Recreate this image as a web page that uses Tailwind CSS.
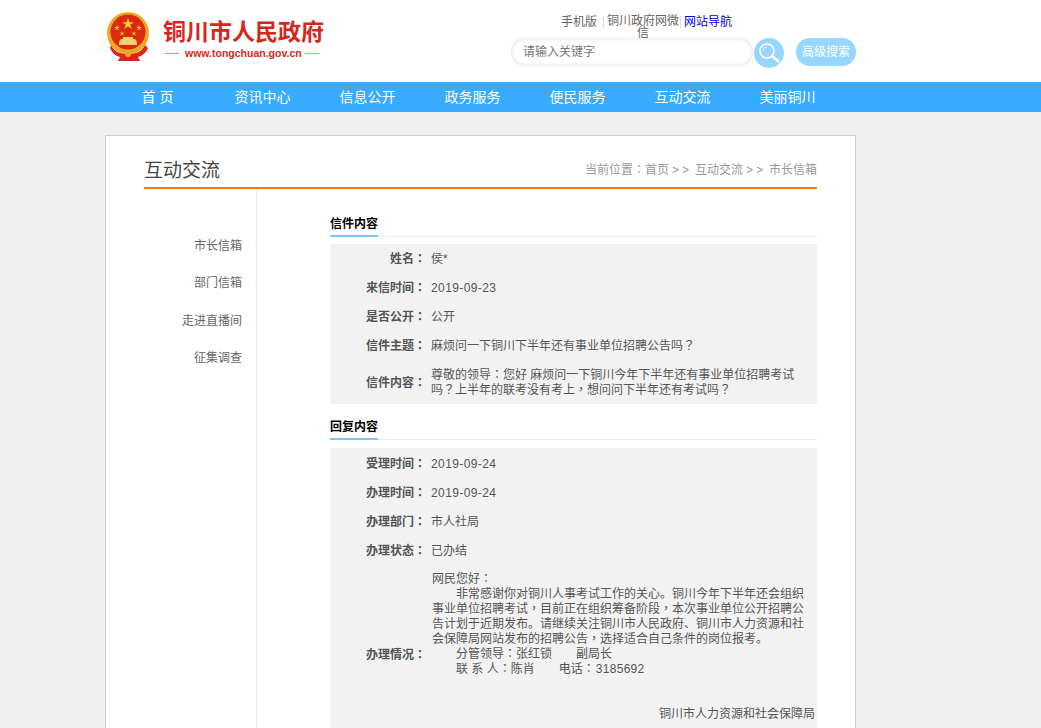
<!DOCTYPE html>
<html>
<head>
<meta charset="utf-8">
<title>铜川市人民政府</title>
<script src="https://cdn.jsdelivr.net/npm/@tailwindcss/browser@4"></script>
</head>
<body class="bg-[#f0f0f0] h-screen overflow-hidden font-['Liberation_Sans','Noto_Sans_CJK_SC',sans-serif] text-[12px] leading-[15px] text-[#555]">
<header class="bg-white h-[82px]">
  <div class="w-[750px] ml-[105px] h-full flex justify-between">
    <div class="flex items-start">
      <svg class="w-[44px] h-[50px] mt-[11px] ml-[1px]" viewBox="0 0 44 50">
        <circle cx="22" cy="22" r="21" fill="#eda91f"/>
        <circle cx="22" cy="21" r="17.500" fill="#dc2a12"/>
        <path d="M22 7l1.4 4.2h4.4l-3.6 2.6 1.4 4.2-3.6-2.6-3.6 2.6 1.4-4.2-3.6-2.6h4.4z" fill="#f8d020"/>
        <path d="M11 14l.7 2h2l-1.6 1.2.6 2-1.7-1.2-1.7 1.2.6-2L8.300 16h2zM33 14l.7 2h2l-1.600 1.200.6 2-1.700-1.200-1.700 1.200.6-2L30.300 16h2zM16 20l.6 1.700h1.800l-1.400 1 .5 1.700-1.500-1-1.500 1 .5-1.700-1.400-1h1.800zM28 20l.6 1.700h1.800l-1.400 1 .5 1.700-1.500-1-1.500 1 .5-1.700-1.400-1h1.800z" fill="#f8d020"/>
        <path d="M13 31h18v3H13zM15 28h14l2 3H13zM17 26h10v2H17z" fill="#f6cf6a"/>
        <path d="M5 34c3 7 10 9 17 9s14-2 17-9l3 3c-2 5-6 8-10 9l2 4H12l2-4c-4-1-8-4-10-9z" fill="#d8281a"/>
        <path d="M5 32c4 7 11 9 17 9s13-2 17-9" fill="none" stroke="#eda91f" stroke-width="3"/>
        <circle cx="22" cy="43" r="3" fill="#eda91f"/>
      </svg>
      <div class="ml-[13px] w-[170px]">
        <div class="mt-[16px] text-[23px] leading-[32px] font-bold text-[#d5281c] whitespace-nowrap">铜川市人民政府</div>
        <div class="-mt-[2px] flex items-center text-[#d5281c] whitespace-nowrap">
          <span class="w-[14px] h-px bg-[#e88a80] ml-[2px]"></span>
          <span class="ml-[6px] mr-[4px] text-[10.5px] leading-[14px] font-bold">www.tongchuan.gov.cn</span>
          <span class="w-[14px] h-px bg-[#e88a80] -ml-[1px]"></span>
        </div>
      </div>
    </div>
    <div class="relative w-[343px] mr-[1px]">
      <div class="flex absolute left-[50px] top-[14px] w-[180px] text-[#666]">
        <a class="w-[36px] text-center whitespace-nowrap mt-[1px]">手机版</a>
        <span class="w-[1px] h-[12px] bg-[#ddd] ml-[6px] mt-[2px]"></span>
        <a class="w-[74px] text-center mt-[1px] ml-[2px] leading-[12px]">铜川政府网微信</a>
        <span class="w-[1px] h-[12px] bg-[#ddd] mt-[2px]"></span>
        <a class="ml-[3px] mt-[1px] text-[#0000ee] whitespace-nowrap">网站导航</a>
      </div>
      <div class="absolute left-0 top-[38px] w-[242px] h-[28px] rounded-full bg-white shadow-[inset_0_0_5px_rgba(0,0,0,0.14),0_0_2px_rgba(0,0,0,0.06)] px-[12px] leading-[28px] text-[#777]">请输入关键字</div>
      <div class="absolute left-[243px] top-[38px] w-[30px] h-[30px] rounded-full bg-[#97d6ff] flex items-center justify-center">
        <svg class="w-[24px] h-[24px]" viewBox="0 0 24 24" fill="none" stroke="#fff">
          <circle cx="10" cy="10" r="7" stroke-width="1.500"/>
          <path d="M15.500 15.500l6 5" stroke-width="2.500" stroke-linecap="round"/>
          <path d="M6 10a4 4 0 0 1 4-4" stroke-width="1" opacity=".7"/>
        </svg>
      </div>
      <div class="absolute left-[285px] top-[38px] w-[60px] h-[28px] rounded-full bg-[#97d6ff] text-white text-center leading-[28px]">高级搜索</div>
    </div>
  </div>
</header>
<nav class="h-[30px] bg-[#38abff]">
  <ul class="flex ml-[105px] text-white text-[14px] leading-[31px]">
    <li class="w-[105px] text-center">首 页</li>
    <li class="w-[105px] text-center">资讯中心</li>
    <li class="w-[105px] text-center">信息公开</li>
    <li class="w-[105px] text-center">政务服务</li>
    <li class="w-[105px] text-center">便民服务</li>
    <li class="w-[105px] text-center">互动交流</li>
    <li class="w-[105px] text-center">美丽铜川</li>
  </ul>
</nav>
<main class="mt-[23px] ml-[105px] w-[751px] bg-white border border-[#cccccc] px-[38px] pb-[40px]">
  <div class="flex justify-between items-end h-[53px] border-b-2 border-[#ff7d00] pb-[2px]">
    <h1 class="text-[19px] leading-[28px] text-[#444]">互动交流</h1>
    <p class="text-[#999] mb-[7px]">当前位置<span class="leading-none font-['Noto_Sans_CJK_TC']">：</span>首页<span class="inline-block w-[26px] text-center tracking-[3px]">&gt;&gt;</span>互动交流<span class="inline-block w-[26px] text-center tracking-[3px]">&gt;&gt;</span>市长信箱</p>
  </div>
  <div class="flex">
    <aside class="w-[113px] shrink-0 border-r border-[#f3ece6] pr-[14px] pt-[50px] text-right">
      <ul class="flex flex-col gap-[22.400px] text-[#666]">
        <li>市长信箱</li>
        <li>部门信箱</li>
        <li>走进直播间</li>
        <li>征集调查</li>
      </ul>
    </aside>
    <section class="ml-[73px] w-[487px] pt-[27px]">
      <div class="border-b border-[#e9e9e9] h-[21px]">
        <h2 class="inline-block h-[21px] border-b-2 border-[#7cc5fb] font-bold text-black leading-[16px]">信件内容</h2>
      </div>
      <dl class="mt-[7px] bg-[#f2f2f2]">
        <div class="flex items-center h-[29px] pt-[2px]"><dt class="w-[96px] mr-[5px] shrink-0 text-right font-bold">姓名<span class="leading-none font-['Noto_Sans_CJK_TC']">：</span></dt><dd>侯*</dd></div>
        <div class="flex items-center h-[29px] pt-[2px]"><dt class="w-[96px] mr-[5px] shrink-0 text-right font-bold">来信时间<span class="leading-none font-['Noto_Sans_CJK_TC']">：</span></dt><dd class="tracking-[0.4px]">2019-09-23</dd></div>
        <div class="flex items-center h-[29px] pt-[2px]"><dt class="w-[96px] mr-[5px] shrink-0 text-right font-bold">是否公开<span class="leading-none font-['Noto_Sans_CJK_TC']">：</span></dt><dd>公开</dd></div>
        <div class="flex items-center h-[29px] pt-[2px]"><dt class="w-[96px] mr-[5px] shrink-0 text-right font-bold">信件主题<span class="leading-none font-['Noto_Sans_CJK_TC']">：</span></dt><dd>麻烦问一下铜川下半年还有事业单位招聘公告吗<span class="leading-none font-['Noto_Sans_CJK_TC']">？</span></dd></div>
        <div class="flex items-center h-[44px] pt-[2px]"><dt class="w-[96px] mr-[5px] shrink-0 text-right font-bold">信件内容<span class="leading-none font-['Noto_Sans_CJK_TC']">：</span></dt><dd class="w-[370px]">尊敬的领导<span class="leading-none font-['Noto_Sans_CJK_TC']">：</span>您好 麻烦问一下铜川今年下半年还有事业单位招聘考试吗<span class="leading-none font-['Noto_Sans_CJK_TC']">？</span>上半年的联考没有考上<span class="leading-none font-['Noto_Sans_CJK_TC']">，</span>想问问下半年还有考试吗<span class="leading-none font-['Noto_Sans_CJK_TC']">？</span></dd></div>
      </dl>
      <div class="mt-[15px] border-b border-[#e9e9e9] h-[21px]">
        <h2 class="inline-block h-[21px] border-b-2 border-[#7cc5fb] font-bold text-black leading-[16px]">回复内容</h2>
      </div>
      <dl class="mt-[8px] bg-[#f2f2f2]">
        <div class="flex items-center h-[29px] pt-[4px]"><dt class="w-[96px] mr-[5px] shrink-0 text-right font-bold">受理时间<span class="leading-none font-['Noto_Sans_CJK_TC']">：</span></dt><dd class="tracking-[0.4px]">2019-09-24</dd></div>
        <div class="flex items-center h-[29px] pt-[4px]"><dt class="w-[96px] mr-[5px] shrink-0 text-right font-bold">办理时间<span class="leading-none font-['Noto_Sans_CJK_TC']">：</span></dt><dd class="tracking-[0.4px]">2019-09-24</dd></div>
        <div class="flex items-center h-[29px] pt-[4px]"><dt class="w-[96px] mr-[5px] shrink-0 text-right font-bold">办理部门<span class="leading-none font-['Noto_Sans_CJK_TC']">：</span></dt><dd>市人社局</dd></div>
        <div class="flex items-center h-[29px] pt-[4px]"><dt class="w-[96px] mr-[5px] shrink-0 text-right font-bold">办理状态<span class="leading-none font-['Noto_Sans_CJK_TC']">：</span></dt><dd>已办结</dd></div>
        <div class="flex items-center pt-[8px] pb-[7px]"><dt class="w-[96px] mr-[5px] mt-[2px] shrink-0 text-right font-bold">办理情况<span class="leading-none font-['Noto_Sans_CJK_TC']">：</span></dt><dd class="w-[384px] pl-[1px]">
          <p>网民您好<span class="leading-none font-['Noto_Sans_CJK_TC']">：</span></p>
          <p class="indent-[24px] w-[374px]">非常感谢你对铜川人事考试工作的关心。铜川今年下半年还会组织事业单位招聘考试<span class="leading-none font-['Noto_Sans_CJK_TC']">，</span>目前正在组织筹备阶段<span class="leading-none font-['Noto_Sans_CJK_TC']">，</span>本次事业单位公开招聘公告计划于近期发布。请继续关注铜川市人民政府、铜川市人力资源和社会保障局网站发布的招聘公告<span class="leading-none font-['Noto_Sans_CJK_TC']">，</span>选择适合自己条件的岗位报考。</p>
          <p class="indent-[24px]">分管领导<span class="leading-none font-['Noto_Sans_CJK_TC']">：</span>张红锁<span class="ml-[24px]">副局长</span></p>
          <p class="indent-[24px]">联 系 人<span class="leading-none font-['Noto_Sans_CJK_TC']">：</span>陈肖<span class="ml-[24px]">电话</span><span class="leading-none font-['Noto_Sans_CJK_TC']">：</span><span class="tracking-[0.3px] ml-[1px]">3185692</span></p>
          <p class="h-[30px]"></p>
          <p class="text-right">铜川市人力资源和社会保障局</p>
          <p class="h-[15px]"></p>
        </dd></div>
      </dl>
    </section>
  </div>
</main>
</body>
</html>
